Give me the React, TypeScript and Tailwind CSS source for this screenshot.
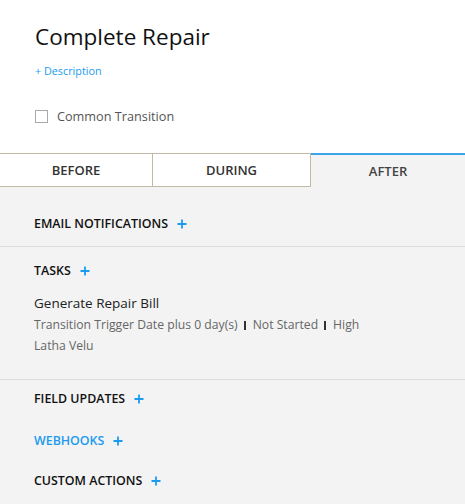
import React from "react";

const Plus = () => (
  <svg width="10" height="10" viewBox="0 0 10 10" className="ml-[9px] inline-block" aria-hidden>
    <path d="M5 0.5V9.5M0.5 5H9.5" stroke="#1a9bf0" strokeWidth="1.8" />
  </svg>
);

function SectionHead({ label, blue }: { label: string; blue?: boolean }) {
  return (
    <div className={`flex items-center h-[16px] text-[12.4px] font-semibold ${blue ? "text-[#1a9bf0]" : "text-[#111]"}`}>
      <span>{label}</span>
      <Plus />
    </div>
  );
}

const Pipe = () => <span className="inline-block w-[2px] h-[9px] bg-[#333] ml-[6px] mr-[7px] align-[-0.5px]" />;

export default function App() {
  return (
    <div className="w-[465px] h-[504px] overflow-hidden bg-white" style={{ fontFamily: "'Open Sans', Lato, sans-serif" }}>
      <div className="pl-[35px] pt-[22px] h-[153px]">
        <div className="text-[22.5px] leading-[30px] text-[#111]">Complete Repair</div>
        <div className="mt-[12px] text-[10.8px] leading-[14px] text-[#1a9bf0]">+ Description</div>
        <div className="mt-[29px] flex items-center">
          <div className="w-[13px] h-[13px] border border-[#aaa] bg-white" />
          <span className="ml-[9px] text-[12.7px] text-[#555]">Common Transition</span>
        </div>
      </div>
      <div className="flex h-[34px]">
        <div className="w-[153px] flex items-center justify-center border-t border-b border-r border-[#c4b8a6] text-[13px] font-semibold text-[#333] pt-[1px]">BEFORE</div>
        <div className="w-[158px] flex items-center justify-center border-t border-b border-r border-[#c4b8a6] text-[13px] font-semibold text-[#333] pt-[1px]">DURING</div>
        <div className="flex-1 flex items-center justify-center border-t-2 border-[#3ba3ea] bg-[#f3f3f3] text-[13px] font-semibold text-[#444] pt-[2px]">AFTER</div>
      </div>
      <div className="bg-[#f3f3f3] h-[317px]">
        <div className="pl-[34px] pt-[29px] h-[60px] border-b border-[#dddddd]">
          <SectionHead label="EMAIL NOTIFICATIONS" />
        </div>
        <div className="pl-[34px] pt-[16px] h-[133px] border-b border-[#dddddd]">
          <SectionHead label="TASKS" />
          <div className="mt-[15px] text-[13.5px] leading-[18px] text-[#222]">Generate Repair Bill</div>
          <div className="mt-[2px] text-[12.2px] leading-[21px] text-[#666]">
            Transition Trigger Date plus 0 day(s)
            <Pipe />
            Not Started
            <Pipe />
            High
          </div>
          <div className="text-[12.2px] leading-[21px] text-[#666]">Latha Velu</div>
        </div>
        <div className="pl-[34px] pt-[11px]">
          <SectionHead label="FIELD UPDATES" />
          <div className="mt-[26px]"><SectionHead label="WEBHOOKS" blue /></div>
          <div className="mt-[24px]"><SectionHead label="CUSTOM ACTIONS" /></div>
        </div>
      </div>
    </div>
  );
}
